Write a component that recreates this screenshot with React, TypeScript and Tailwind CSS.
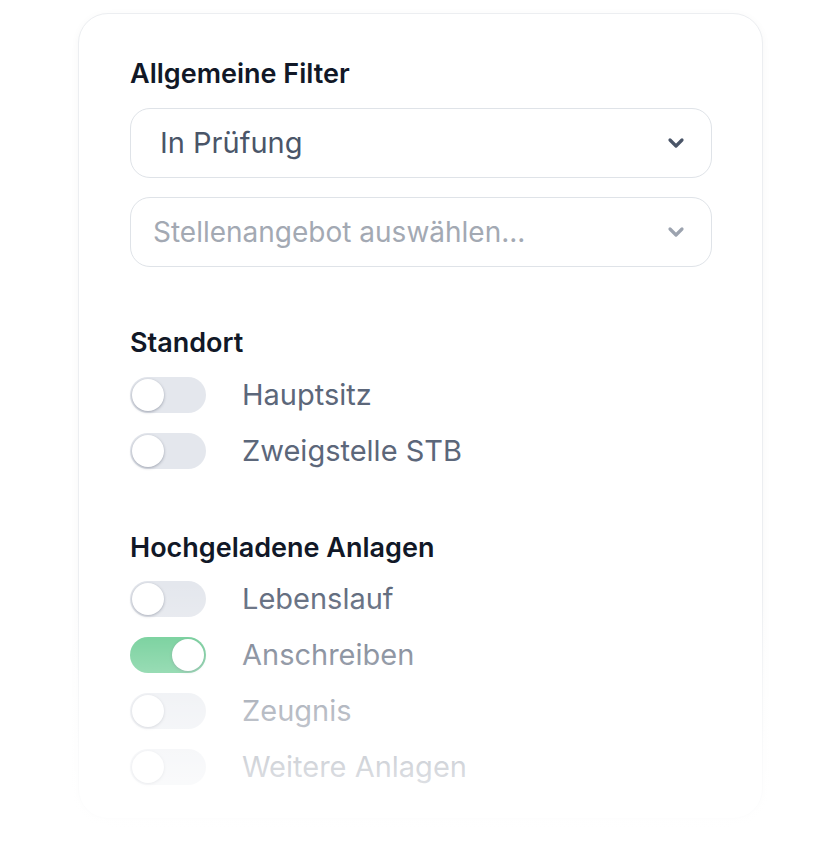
import { useState } from 'react';

const Chevron = ({ className }: { className: string }) => (
  <svg width="18" height="12" viewBox="0 0 18 12" className={className}>
    <polyline points="3,3 9,9 15,3" fill="none" stroke="currentColor" strokeWidth="3.2" strokeLinecap="round" strokeLinejoin="round" />
  </svg>
);

const Select = ({ value, placeholder }: { value?: string; placeholder: string }) => (
  <div className="flex h-[70px] w-[582px] items-center justify-between rounded-[20px] border border-[#dfe3e8] bg-white pl-[29px] pr-[26px]">
    {value ? (
      <span className="text-[29px] text-[#4a5568]">{value}</span>
    ) : (
      <span className="-ml-[7px] text-[28px] text-[#a3a9b3]">{placeholder}</span>
    )}
    <Chevron className={value ? 'text-[#4a5568]' : 'text-[#9ca3af]'} />
  </div>
);

const Toggle = ({ label, initial = false }: { label: string; initial?: boolean }) => {
  const [on, setOn] = useState(initial);
  return (
    <div className="flex h-[56px] items-center gap-[36px]">
      <button
        onClick={() => setOn(!on)}
        className={`relative h-[36px] w-[76px] rounded-full ${on ? 'bg-[#55c584]' : 'bg-[#e4e7ed]'}`}
      >
        <span
          className={`absolute top-[2px] h-[32px] w-[32px] rounded-full bg-white shadow-[0_1px_3px_rgba(70,80,100,0.45)] ${on ? 'left-[42px]' : 'left-[2px]'}`}
        />
      </button>
      <span className="text-[29px] text-[#5c677a]">{label}</span>
    </div>
  );
};

export default function App() {
  return (
    <div className="min-h-screen bg-white pl-[78px] pt-[13px] font-['Inter',sans-serif]">
      <div className="relative h-[806px] w-[685px]">
        <div className="h-full w-full rounded-[30px] border border-[#eceef1] bg-white px-[51px] pt-[44px] shadow-[0_2px_8px_rgba(0,0,0,0.04)]">
          <h2 className="text-[27px] leading-[32px] font-semibold text-[#111827]">Allgemeine Filter</h2>
          <div className="mt-[18px] flex flex-col gap-[19px]">
            <Select value="In Prüfung" placeholder="" />
            <Select placeholder="Stellenangebot auswählen..." />
          </div>

          <h2 className="mt-[60px] text-[27px] leading-[32px] font-semibold text-[#111827]">Standort</h2>
          <div className="mt-[8px]">
            <Toggle label="Hauptsitz" />
            <Toggle label="Zweigstelle STB" />
          </div>

          <h2 className="mt-[53px] text-[27px] leading-[32px] font-semibold text-[#111827]">Hochgeladene Anlagen</h2>
          <div className="mt-[7px]">
            <Toggle label="Lebenslauf" />
            <Toggle label="Anschreiben" initial />
            <Toggle label="Zeugnis" />
            <Toggle label="Weitere Anlagen" />
          </div>
        </div>
        {/* fade out */}
        <div className="pointer-events-none absolute bottom-[-14px] left-[-20px] right-[-20px] h-[250px] bg-gradient-to-b from-white/0 via-white/55 to-white/95" />
      </div>
    </div>
  );
}
